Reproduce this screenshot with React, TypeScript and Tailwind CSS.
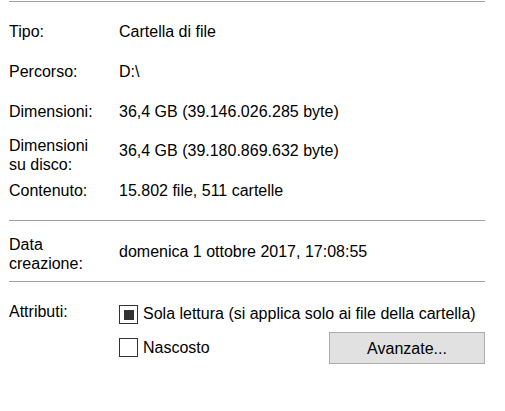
import React from "react";

function Row({ label, value, mt }: { label: React.ReactNode; value: React.ReactNode; mt: string }) {
  return (
    <div className={`flex ${mt}`}>
      <div className="w-[110px] shrink-0">{label}</div>
      <div>{value}</div>
    </div>
  );
}

export default function App() {
  return (
    <div className="w-[505px] h-[411px] bg-white text-black text-[16px] leading-[19px] font-['Liberation_Sans',Arial,sans-serif] overflow-hidden">
      <div className="ml-[9px] w-[476px]">
        <div className="mt-px h-px bg-[#a0a0a0]" />
        <Row mt="mt-[20px]" label="Tipo:" value="Cartella di file" />
        <Row mt="mt-[21px]" label="Percorso:" value="D:\" />
        <Row mt="mt-[21px]" label="Dimensioni:" value="36,4 GB (39.146.026.285 byte)" />
        <div className="flex mt-[15px]">
          <div className="w-[110px] shrink-0">
            Dimensioni
            <br />
            su disco:
          </div>
          <div className="pt-[5px]">36,4 GB (39.180.869.632 byte)</div>
        </div>
        <Row mt="mt-[7px]" label="Contenuto:" value="15.802 file, 511 cartelle" />
        <div className="mt-[20px] h-px bg-[#a0a0a0]" />
        <div className="flex mt-[14px]">
          <div className="w-[110px] shrink-0">
            Data
            <br />
            creazione:
          </div>
          <div className="pt-[7px]">domenica 1 ottobre 2017, 17:08:55</div>
        </div>
        <div className="mt-[8px] h-px bg-[#a0a0a0]" />
        <div className="flex mt-[20px]">
          <div className="w-[110px] shrink-0">Attributi:</div>
          <div className="flex flex-col flex-1">
            <div className="flex items-start">
              <div className="mt-[3px] w-[19px] h-[19px] border border-[#333333] flex items-center justify-center shrink-0">
                <div className="w-[10px] h-[10px] bg-[#333333]" />
              </div>
              <div className="ml-[5px] mt-[2px]">Sola lettura (si applica solo ai file della cartella)</div>
            </div>
            <div className="flex items-start mt-[8px]">
              <div className="mt-[6px] w-[19px] h-[19px] border border-[#333333] shrink-0" />
              <div className="ml-[5px] mt-[6px]">Nascosto</div>
              <div className="ml-auto w-[156px] h-[32px] border border-[#adadad] bg-[#e1e1e1] flex items-center justify-center">
                Avanzate...
              </div>
            </div>
          </div>
        </div>
      </div>
    </div>
  );
}
